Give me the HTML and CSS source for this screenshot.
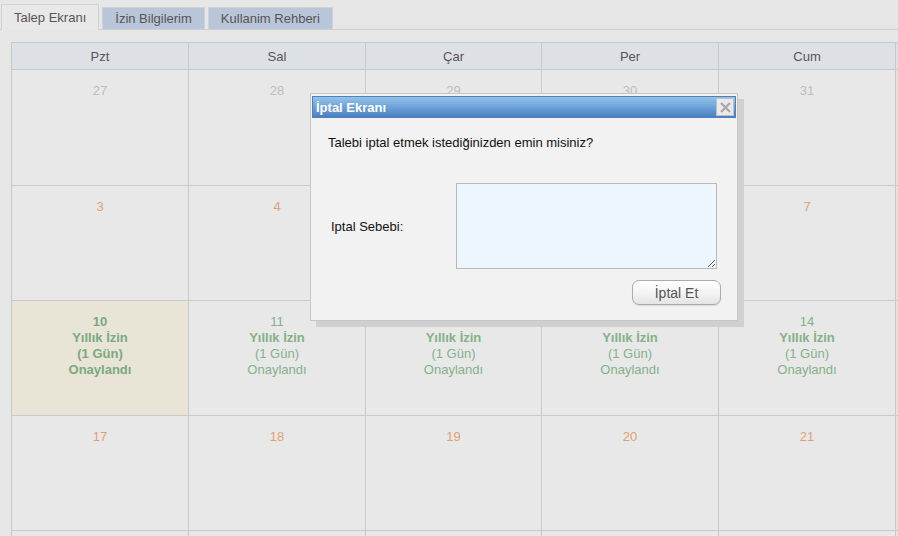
FILE: index.html
```html
<!DOCTYPE html>
<html lang="tr">
<head>
    <meta charset="UTF-8">
    <title>Talep Ekranı</title>
    <link rel="stylesheet" href="styles.css">
</head>
<body>
    <!-- Tabs -->
    <div class="tabs">
        <div class="tab active">Talep Ekranı</div>
        <div class="tab">İzin Bilgilerim</div>
        <div class="tab">Kullanim Rehberi</div>
    </div>

    <!-- Calendar -->
    <div class="calendar">
        <div class="head">Pzt</div>
        <div class="head">Sal</div>
        <div class="head">Çar</div>
        <div class="head">Per</div>
        <div class="head">Cum</div>
        <div class="head"></div>

        <div class="day old">27</div>
        <div class="day old">28</div>
        <div class="day old">29</div>
        <div class="day old">30</div>
        <div class="day old">31</div>
        <div class="day weekend"></div>

        <div class="day">3</div>
        <div class="day">4</div>
        <div class="day">5</div>
        <div class="day">6</div>
        <div class="day">7</div>
        <div class="day weekend"></div>

        <div class="day leave today">10<br><b>Yıllık İzin</b><br>(1 Gün)<br>Onaylandı</div>
        <div class="day leave">11<br><b>Yıllık İzin</b><br>(1 Gün)<br>Onaylandı</div>
        <div class="day leave">12<br><b>Yıllık İzin</b><br>(1 Gün)<br>Onaylandı</div>
        <div class="day leave">13<br><b>Yıllık İzin</b><br>(1 Gün)<br>Onaylandı</div>
        <div class="day leave">14<br><b>Yıllık İzin</b><br>(1 Gün)<br>Onaylandı</div>
        <div class="day weekend"></div>

        <div class="day">17</div>
        <div class="day">18</div>
        <div class="day">19</div>
        <div class="day">20</div>
        <div class="day">21</div>
        <div class="day weekend"></div>

        <div class="day"></div>
        <div class="day"></div>
        <div class="day"></div>
        <div class="day"></div>
        <div class="day"></div>
        <div class="day weekend"></div>
    </div>

    <!-- Cancel dialog -->
    <div class="dialog">
        <div class="dialog-title">
            <span>İptal Ekranı</span>
            <div class="close">
                <svg width="15" height="15" viewBox="0 0 15 15">
                    <path d="M3 3 L12 12 M12 3 L3 12" stroke="#a8a8a8" stroke-width="2.2" fill="none"/>
                </svg>
            </div>
        </div>
        <div class="dialog-body">
            <p class="message">Talebi iptal etmek istediğinizden emin misiniz?</p>
            <div class="reason">
                <label for="reason">Iptal Sebebi:</label>
                <textarea id="reason"></textarea>
            </div>
            <div class="actions">
                <button class="cancel-btn">İptal Et</button>
            </div>
        </div>
    </div>
</body>
</html>
```

FILE: styles.css
```css
body {
    margin: 0;
    padding: 5px 0 0 0;
    font-family: "Liberation Sans", Arial, sans-serif;
    font-size: 13px;
    background-color: #e6e6e6;
    overflow: hidden;
    height: 531px;
    position: relative;
}

/* Tabs */
.tabs {
    display: flex;
    align-items: flex-end;
    gap: 3px;
    padding-left: 1px;
    border-bottom: 1px solid #cfcfcf;
    height: 24px;
}

.tab {
    height: 21px;
    line-height: 21px;
    padding: 0 12px;
    color: #555;
    background-color: #b9c5d9;
    border: 1px solid #d2d2d2;
    border-bottom: none;
}

.tab.active {
    height: 25px;
    line-height: 25px;
    background-color: #e8e8e8;
    margin-bottom: -1px;
}

/* Calendar grid */
.calendar {
    margin: 12px 0 0 11px;
    display: grid;
    grid-template-columns: 176px 176px 175px 176px 176px 176px;
    grid-template-rows: 26px 115px repeat(4, 114px);
    gap: 1px;
    padding: 1px;
    background-color: #c9c9c9;
    width: max-content;
}

.head {
    background-color: #dde0e4;
    color: #555;
    text-align: center;
    padding-top: 1px;
    line-height: 26px;
    box-sizing: border-box;
}

.day {
    background-color: #e8e8e8;
    color: #e3a074;
    text-align: center;
    padding-top: 13px;
    line-height: 16px;
}

.day.old {
    color: #bdbdbd;
}

.day.weekend {
    background-color: #e9e1d9;
}

.day.leave {
    color: #82b288;
}

.day.today {
    background-color: #e8e4d6;
    font-weight: bold;
    color: #7aaa7e;
}

/* Dialog */
.dialog {
    position: absolute;
    left: 310px;
    top: 93px;
    width: 424px;
    height: 223px;
    padding: 2px 1px 1px 1px;
    background-color: #f2f2f2;
    border: 1px solid #c6c6c6;
    box-shadow: 6px 6px 0 #d0d0d0;
}

.dialog-title {
    height: 20px;
    display: flex;
    align-items: center;
    justify-content: space-between;
    background: linear-gradient(#93c3ea, #6a9ed6 55%, #4c7fc2);
    border: 1px solid #4f7fbd;
    color: #fff;
    font-weight: bold;
    padding-left: 3px;
}

.close {
    width: 16px;
    height: 16px;
    margin-right: 1px;
    background-color: #eaeaea;
    border: 1px solid #c0c0c0;
    display: flex;
    align-items: center;
    justify-content: center;
}

.dialog-body {
    padding: 17px 15px 0 16px;
}

.message {
    margin: 0;
    line-height: 16px;
    color: #111;
}

.reason {
    display: flex;
    align-items: center;
    margin-top: 32px;
    padding-left: 3px;
}

.reason label {
    width: 125px;
    color: #111;
}

textarea {
    width: 261px;
    height: 86px;
    box-sizing: border-box;
    background-color: #eef6fd;
    border: 1px solid #b9b9b9;
    margin: 0;
}

.actions {
    display: flex;
    justify-content: flex-end;
    margin-top: 11px;
}

.cancel-btn {
    width: 89px;
    height: 25px;
    font-family: "Liberation Sans", Arial, sans-serif;
    font-size: 14px;
    color: #555;
    background: linear-gradient(#ffffff, #f4f4f4 50%, #e4e4e4);
    border: 1px solid #ababab;
    border-radius: 7px;
    box-shadow: 0 1px 1px rgba(0, 0, 0, 0.1);
}
```
